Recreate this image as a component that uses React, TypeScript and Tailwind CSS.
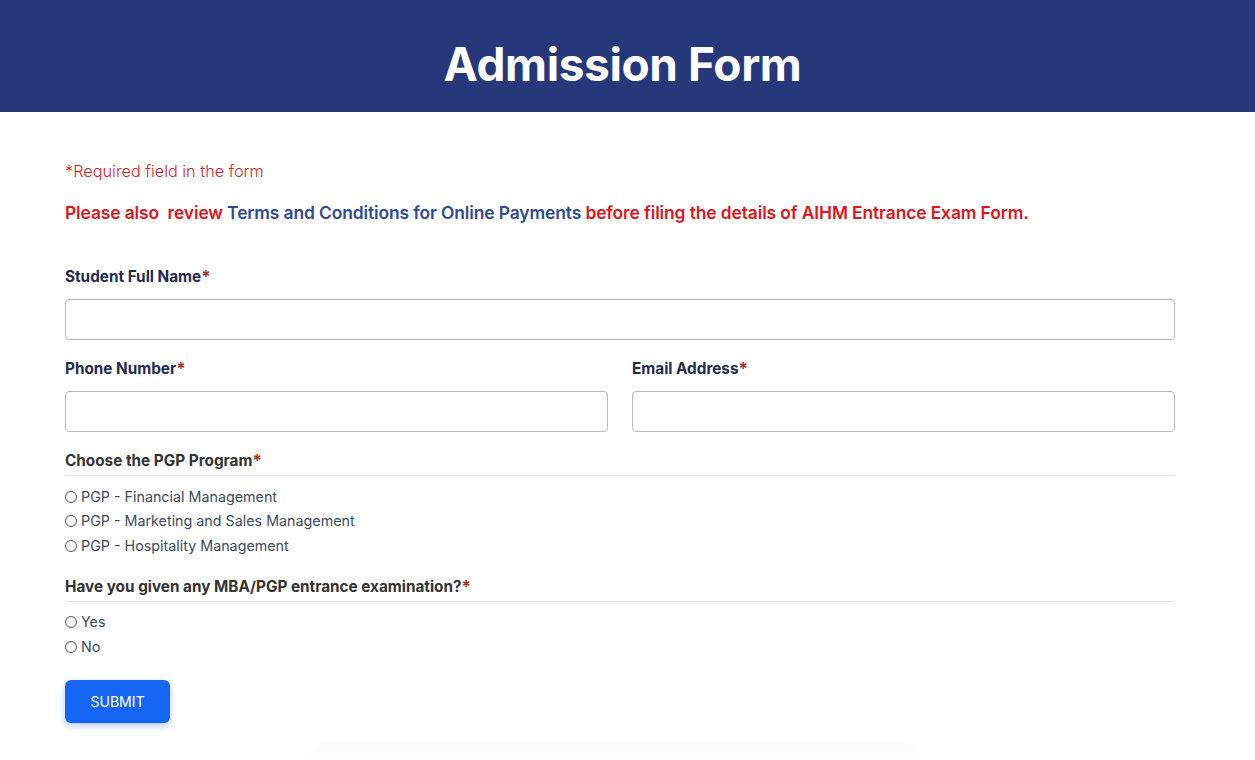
import { FC } from "react";

const Star: FC = () => <span className="text-[#a8322d] text-[17px] leading-none">*</span>;

const Radio: FC<{ label: string; name: string }> = ({ label, name }) => (
	<label className="flex items-center h-[24.5px] text-[14.3px] text-[#3c4a63]">
		<input type="radio" name={name} className="appearance-none w-[12px] h-[12px] rounded-full border border-[#555] bg-white mr-[4px] mt-[1px]" />
		{label}
	</label>
);

const App: FC = () => {
	return (
		<div className="min-h-[760px] bg-white font-['Inter','Liberation_Sans',sans-serif]">
			<header className="h-[112px] bg-[#26377a] flex items-center justify-center">
				<h1 className="text-white text-[46px] font-bold tracking-[-0.4px] mt-[16px] mr-[10px]">Admission Form</h1>
			</header>
			<main className="w-[1110px] ml-[65px] pt-[48px]">
				<p className="text-[#d9232a] text-[16.3px] font-light leading-[22px]">*Required field in the form</p>
				<p className="mt-[20px] text-[17.4px] font-semibold text-[#e0141d] leading-[22px] tracking-[-0.1px]">
					Please also&nbsp; review <span className="text-[#2d4a99]">Terms and Conditions for Online Payments</span> before filing the details of AIHM Entrance Exam Form.
				</p>

				<div className="mt-[42px]">
					<label className="flex items-center text-[15.3px] font-bold text-[#1f2b52] h-[22px]">
						Student Full Name<Star />
					</label>
					<input type="text" className="mt-[11px] w-full h-[41px] border border-[#b9b9b9] rounded-[4px]" />
				</div>

				<div className="mt-[18px] grid grid-cols-2 gap-x-[24px]">
					<div>
						<label className="flex items-center text-[15.3px] font-bold text-[#1f2b52] h-[22px]">
							Phone Number<Star />
						</label>
						<input type="text" className="mt-[11px] w-full h-[41px] border border-[#b9b9b9] rounded-[4px]" />
					</div>
					<div>
						<label className="flex items-center text-[15.3px] font-bold text-[#1f2b52] h-[22px]">
							Email Address<Star />
						</label>
						<input type="email" className="mt-[11px] w-full h-[41px] border border-[#b9b9b9] rounded-[4px]" />
					</div>
				</div>

				<div className="mt-[18px]">
					<div className="flex items-center text-[15.3px] font-bold text-[#333333] h-[22px]">
						Choose the PGP Program<Star />
					</div>
					<div className="mt-[3px] border-t border-[#e2e2e2] pt-[8px]">
						<Radio name="pgp" label="PGP - Financial Management" />
						<Radio name="pgp" label="PGP - Marketing and Sales Management" />
						<Radio name="pgp" label="PGP - Hospitality Management" />
					</div>
				</div>

				<div className="mt-[19px]">
					<div className="flex items-center text-[15.3px] font-bold text-[#333333] h-[22px]">
						Have you given any MBA/PGP entrance examination?<Star />
					</div>
					<div className="mt-[2px] border-t border-[#e2e2e2] pt-[8px]">
						<Radio name="exam" label="Yes" />
						<Radio name="exam" label="No" />
					</div>
				</div>

				<button className="mt-[21px] w-[105px] h-[43px] rounded-[6px] bg-[#1466f2] text-white text-[14px] shadow-[0_3px_6px_rgba(20,70,200,0.3)]">
					SUBMIT
				</button>
			</main>
			<div className="mt-[20px] ml-[310px] w-[610px] h-[15px] rounded-t-[20px] bg-[#fcfcfc]" />
		</div>
	);
};

export default App;
